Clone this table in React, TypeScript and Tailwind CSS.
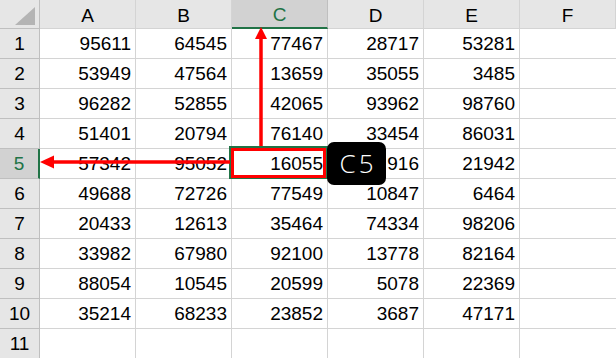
const cols = ["A", "B", "C", "D", "E", "F"];

// D5 is mostly hidden behind the name box; only its last digits show
const data: (number | string | null)[][] = [
  [95611, 64545, 77467, 28717, 53281],
  [53949, 47564, 13659, 35055, 3485],
  [96282, 52855, 42065, 93962, 98760],
  [51401, 20794, 76140, 33454, 86031],
  [57342, 95052, 16055, "916", 21942],
  [49688, 72726, 77549, 10847, 6464],
  [20433, 12613, 35464, 74334, 98206],
  [33982, 67980, 92100, 13778, 82164],
  [88054, 10545, 20599, 5078, 22369],
  [35214, 68233, 23852, 3687, 47171],
  [null, null, null, null, null],
];

export default function App() {
  return (
    <div
      className="relative w-[616px] h-[358px] overflow-hidden bg-white text-black"
      style={{ fontFamily: '"Liberation Sans", Arial, sans-serif' }}
    >
      <div className="grid grid-cols-[40px_repeat(5,96px)_1fr] text-[19px]">
        {/* header row */}
        <div className="h-[29px] bg-[#e6e6e6] border-r border-b border-[#bfbfbf] flex items-end justify-end pr-[4px] pb-[3px]">
          <svg width="20" height="18" viewBox="0 0 20 18">
            <polygon points="20,0 20,18 0,18" fill="#b4b4b4" />
          </svg>
        </div>
        {cols.map((c) => (
          <div
            key={c}
            className={
              c === "C"
                ? "h-[29px] bg-[#d2d2d2] border-r border-[#bfbfbf] border-b-2 border-b-[#217346] text-[#217346] flex items-center justify-center leading-none pt-[2px]"
                : "h-[29px] bg-[#e6e6e6] border-r border-b border-[#d4d4d4] flex items-center justify-center leading-none pt-[2px]"
            }
          >
            {c}
          </div>
        ))}

        {data.map((row, r) => (
          <>
            <div
              key={`h${r}`}
              className={
                r === 4
                  ? "h-[30px] bg-[#d2d2d2] border-b border-[#bfbfbf] border-r-2 border-r-[#217346] text-[#217346] flex items-center justify-center pt-[2px]"
                  : "h-[30px] bg-[#e6e6e6] border-r border-b border-[#bfbfbf] flex items-center justify-center pt-[2px]"
              }
            >
              {r + 1}
            </div>
            {row.map((v, c) => (
              <div
                key={`${r}-${c}`}
                className="h-[30px] border-r border-b border-[#d4d4d4] flex items-center justify-end pr-[4px] pt-[2px]"
              >
                {v ?? ""}
              </div>
            ))}
            <div key={`f${r}`} className="h-[30px] border-b border-[#d4d4d4]" />
          </>
        ))}
      </div>

      {/* selected cell C5 */}
      <div className="absolute left-[229px] top-[146px] w-[99px] h-[33px] border-2 border-[#217346]" />
      <div className="absolute left-[231px] top-[148px] w-[95px] h-[30px] border-[3px] border-[#ff0000]" />

      {/* arrows */}
      <svg className="absolute inset-0 pointer-events-none" width="616" height="358">
        <line x1="261" y1="146" x2="261" y2="38" stroke="#ff0000" strokeWidth="3.5" />
        <polygon points="261,27 255,39 267,39" fill="#ff0000" />
        <line x1="230" y1="162" x2="52" y2="162" stroke="#ff0000" strokeWidth="3.5" />
        <polygon points="40,162 54,155.5 54,168.5" fill="#ff0000" />
      </svg>

      {/* name box */}
      <div
        className="absolute left-[327px] top-[142px] w-[59px] h-[43px] bg-black rounded-[7px] flex items-center justify-center text-white text-[26px] font-light tracking-[3px] pl-[3px]"
        style={{ fontFamily: '"Open Sans", sans-serif' }}
      >
        C5
      </div>
    </div>
  );
}
